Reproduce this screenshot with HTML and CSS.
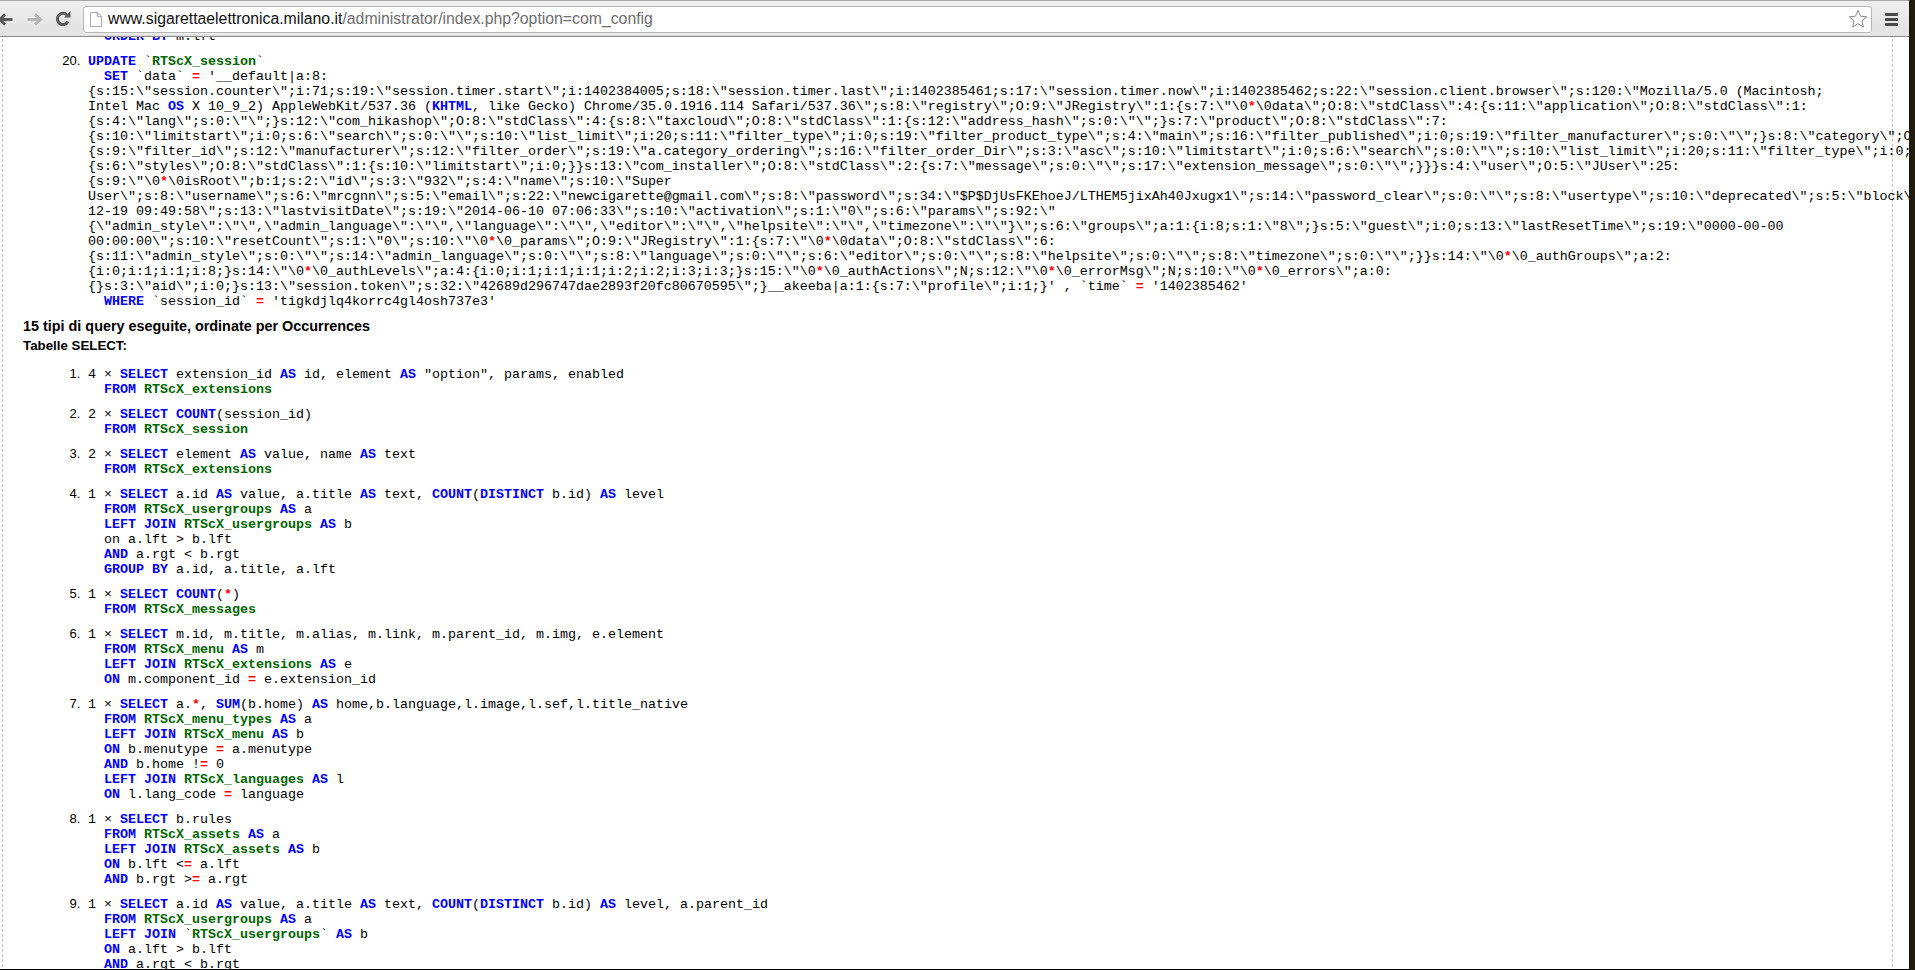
FILE: index.html
```html
<!DOCTYPE html>
<html lang="it">
<head>
<meta charset="utf-8">
<title>Joomla debug</title>
<link rel="stylesheet" href="styles.css">
</head>
<body>
<div class="window">
<div class="browser">
<header class="toolbar">
  <svg class="nav nav-back" viewBox="0 0 16 14"><path d="M1 7h14M7 1.500 1 7l6 5.500" fill="none" stroke="#5a5a5a" stroke-width="3"/></svg>
  <svg class="nav nav-forward" viewBox="0 0 16 14"><path d="M0 7h14M8 1.500 14 7l-6 5.500" fill="none" stroke="#b4b4b4" stroke-width="3"/></svg>
  <svg class="nav nav-reload" viewBox="0 0 16 16"><path d="M13 10.500A5.600 5.600 0 1 1 12 4" fill="none" stroke="#5a5a5a" stroke-width="3"/><path d="M9 6.500h6.500V0z" fill="#5a5a5a"/></svg>
  <div class="omnibox">
    <svg class="page-icon" viewBox="0 0 12 15"><path d="M.5.500h7l4 4v10H.5zM7.500.500v4h4" fill="#fff" stroke="#aaa"/></svg>
    <div class="url"><span class="url-host">www.sigarettaelettronica.milano.it</span><span class="url-path">/administrator/index.php?option=com_config</span></div>
    <svg class="star" viewBox="0 0 20 20"><path d="M10 1.500l2.500 5.700 6.200.6-4.700 4.100 1.400 6.100L10 14.800l-5.400 3.200L6 11.900 1.300 7.800l6.200-.6z" fill="#fff" stroke="#8a8a8a"/></svg>
  </div>
  <div class="menu"><i></i><i></i><i></i></div>
</header>
<main class="viewport">
<div class="page">
<ol class="queries queries-first" start="19">
<li class="query query-clipped"><code class="sql">&nbsp;&nbsp;<b class="k">ORDER BY</b> m.lft</code></li>
<li class="query"><code class="sql"><b class="k">UPDATE</b> `<b class="t">RTScX_session</b>`<br>
&nbsp;&nbsp;<b class="k">SET</b> `data` <b class="o">=</b> '__default|a:8:<br>
{s:15:\"session.counter\";i:71;s:19:\"session.timer.start\";i:1402384005;s:18:\"session.timer.last\";i:1402385461;s:17:\"session.timer.now\";i:1402385462;s:22:\"session.client.browser\";s:120:\"Mozilla/5.0 (Macintosh;<br>
Intel Mac <b class="k">OS</b> X 10_9_2) AppleWebKit/537.36 (<b class="k">KHTML</b>, like Gecko) Chrome/35.0.1916.114 Safari/537.36\";s:8:\"registry\";O:9:\"JRegistry\":1:{s:7:\"\0<b class="o">*</b>\0data\";O:8:\"stdClass\":4:{s:11:\"application\";O:8:\"stdClass\":1:<br>
{s:4:\"lang\";s:0:\"\";}s:12:\"com_hikashop\";O:8:\"stdClass\":4:{s:8:\"taxcloud\";O:8:\"stdClass\":1:{s:12:\"address_hash\";s:0:\"\";}s:7:\"product\";O:8:\"stdClass\":7:<br>
{s:10:\"limitstart\";i:0;s:6:\"search\";s:0:\"\";s:10:\"list_limit\";i:20;s:11:\"filter_type\";i:0;s:19:\"filter_product_type\";s:4:\"main\";s:16:\"filter_published\";i:0;s:19:\"filter_manufacturer\";s:0:\"\";}s:8:\"category\";O:8:\"stdClass\":7:<br>
{s:9:\"filter_id\";s:12:\"manufacturer\";s:12:\"filter_order\";s:19:\"a.category_ordering\";s:16:\"filter_order_Dir\";s:3:\"asc\";s:10:\"limitstart\";i:0;s:6:\"search\";s:0:\"\";s:10:\"list_limit\";i:20;s:11:\"filter_type\";i:0;s:4:\"main\";<br>
{s:6:\"styles\";O:8:\"stdClass\":1:{s:10:\"limitstart\";i:0;}}s:13:\"com_installer\";O:8:\"stdClass\":2:{s:7:\"message\";s:0:\"\";s:17:\"extension_message\";s:0:\"\";}}}s:4:\"user\";O:5:\"JUser\":25:<br>
{s:9:\"\0<b class="o">*</b>\0isRoot\";b:1;s:2:\"id\";s:3:\"932\";s:4:\"name\";s:10:\"Super<br>
User\";s:8:\"username\";s:6:\"mrcgnn\";s:5:\"email\";s:22:\"newcigarette@gmail.com\";s:8:\"password\";s:34:\"$P$DjUsFKEhoeJ/LTHEM5jixAh40Jxugx1\";s:14:\"password_clear\";s:0:\"\";s:8:\"usertype\";s:10:\"deprecated\";s:5:\"block\";i:0;s:9:\"sendEmail\";<br>
12-19 09:49:58\";s:13:\"lastvisitDate\";s:19:\"2014-06-10 07:06:33\";s:10:\"activation\";s:1:\"0\";s:6:\"params\";s:92:\"<br>
{\"admin_style\":\"\",\"admin_language\":\"\",\"language\":\"\",\"editor\":\"\",\"helpsite\":\"\",\"timezone\":\"\"}\";s:6:\"groups\";a:1:{i:8;s:1:\"8\";}s:5:\"guest\";i:0;s:13:\"lastResetTime\";s:19:\"0000-00-00<br>
00:00:00\";s:10:\"resetCount\";s:1:\"0\";s:10:\"\0<b class="o">*</b>\0_params\";O:9:\"JRegistry\":1:{s:7:\"\0<b class="o">*</b>\0data\";O:8:\"stdClass\":6:<br>
{s:11:\"admin_style\";s:0:\"\";s:14:\"admin_language\";s:0:\"\";s:8:\"language\";s:0:\"\";s:6:\"editor\";s:0:\"\";s:8:\"helpsite\";s:0:\"\";s:8:\"timezone\";s:0:\"\";}}s:14:\"\0<b class="o">*</b>\0_authGroups\";a:2:<br>
{i:0;i:1;i:1;i:8;}s:14:\"\0<b class="o">*</b>\0_authLevels\";a:4:{i:0;i:1;i:1;i:1;i:2;i:2;i:3;i:3;}s:15:\"\0<b class="o">*</b>\0_authActions\";N;s:12:\"\0<b class="o">*</b>\0_errorMsg\";N;s:10:\"\0<b class="o">*</b>\0_errors\";a:0:<br>
{}s:3:\"aid\";i:0;}s:13:\"session.token\";s:32:\"42689d296747dae2893f20fc80670595\";}__akeeba|a:1:{s:7:\"profile\";i:1;}' , `time` <b class="o">=</b> '1402385462'<br>
&nbsp;&nbsp;<b class="k">WHERE</b> `session_id` <b class="o">=</b> 'tigkdjlq4korrc4gl4osh737e3'</code></li>
</ol>
<h4 class="summary-title">15 tipi di query eseguite, ordinate per Occurrences</h4>
<h5 class="summary-sub">Tabelle SELECT:</h5>
<ol class="queries queries-summary">
<li class="query"><code class="sql">4 × <b class="k">SELECT</b> extension_id <b class="k">AS</b> id, element <b class="k">AS</b> "option", params, enabled<br>
&nbsp;&nbsp;<b class="k">FROM</b> <b class="t">RTScX_extensions</b></code></li>
<li class="query"><code class="sql">2 × <b class="k">SELECT</b> <b class="k">COUNT</b>(session_id)<br>
&nbsp;&nbsp;<b class="k">FROM</b> <b class="t">RTScX_session</b></code></li>
<li class="query"><code class="sql">2 × <b class="k">SELECT</b> element <b class="k">AS</b> value, name <b class="k">AS</b> text<br>
&nbsp;&nbsp;<b class="k">FROM</b> <b class="t">RTScX_extensions</b></code></li>
<li class="query"><code class="sql">1 × <b class="k">SELECT</b> a.id <b class="k">AS</b> value, a.title <b class="k">AS</b> text, <b class="k">COUNT</b>(<b class="k">DISTINCT</b> b.id) <b class="k">AS</b> level<br>
&nbsp;&nbsp;<b class="k">FROM</b> <b class="t">RTScX_usergroups</b> <b class="k">AS</b> a<br>
&nbsp;&nbsp;<b class="k">LEFT JOIN</b> <b class="t">RTScX_usergroups</b> <b class="k">AS</b> b<br>
&nbsp;&nbsp;on a.lft &gt; b.lft<br>
&nbsp;&nbsp;<b class="k">AND</b> a.rgt &lt; b.rgt<br>
&nbsp;&nbsp;<b class="k">GROUP BY</b> a.id, a.title, a.lft</code></li>
<li class="query"><code class="sql">1 × <b class="k">SELECT</b> <b class="k">COUNT</b>(<b class="o">*</b>)<br>
&nbsp;&nbsp;<b class="k">FROM</b> <b class="t">RTScX_messages</b></code></li>
<li class="query"><code class="sql">1 × <b class="k">SELECT</b> m.id, m.title, m.alias, m.link, m.parent_id, m.img, e.element<br>
&nbsp;&nbsp;<b class="k">FROM</b> <b class="t">RTScX_menu</b> <b class="k">AS</b> m<br>
&nbsp;&nbsp;<b class="k">LEFT JOIN</b> <b class="t">RTScX_extensions</b> <b class="k">AS</b> e<br>
&nbsp;&nbsp;<b class="k">ON</b> m.component_id <b class="o">=</b> e.extension_id</code></li>
<li class="query"><code class="sql">1 × <b class="k">SELECT</b> a.<b class="o">*</b>, <b class="k">SUM</b>(b.home) <b class="k">AS</b> home,b.language,l.image,l.sef,l.title_native<br>
&nbsp;&nbsp;<b class="k">FROM</b> <b class="t">RTScX_menu_types</b> <b class="k">AS</b> a<br>
&nbsp;&nbsp;<b class="k">LEFT JOIN</b> <b class="t">RTScX_menu</b> <b class="k">AS</b> b<br>
&nbsp;&nbsp;<b class="k">ON</b> b.menutype <b class="o">=</b> a.menutype<br>
&nbsp;&nbsp;<b class="k">AND</b> b.home !<b class="o">=</b> 0<br>
&nbsp;&nbsp;<b class="k">LEFT JOIN</b> <b class="t">RTScX_languages</b> <b class="k">AS</b> l<br>
&nbsp;&nbsp;<b class="k">ON</b> l.lang_code <b class="o">=</b> language</code></li>
<li class="query"><code class="sql">1 × <b class="k">SELECT</b> b.rules<br>
&nbsp;&nbsp;<b class="k">FROM</b> <b class="t">RTScX_assets</b> <b class="k">AS</b> a<br>
&nbsp;&nbsp;<b class="k">LEFT JOIN</b> <b class="t">RTScX_assets</b> <b class="k">AS</b> b<br>
&nbsp;&nbsp;<b class="k">ON</b> b.lft &lt;<b class="o">=</b> a.lft<br>
&nbsp;&nbsp;<b class="k">AND</b> b.rgt &gt;<b class="o">=</b> a.rgt</code></li>
<li class="query"><code class="sql">1 × <b class="k">SELECT</b> a.id <b class="k">AS</b> value, a.title <b class="k">AS</b> text, <b class="k">COUNT</b>(<b class="k">DISTINCT</b> b.id) <b class="k">AS</b> level, a.parent_id<br>
&nbsp;&nbsp;<b class="k">FROM</b> <b class="t">RTScX_usergroups</b> <b class="k">AS</b> a<br>
&nbsp;&nbsp;<b class="k">LEFT JOIN</b> `<b class="t">RTScX_usergroups</b>` <b class="k">AS</b> b<br>
&nbsp;&nbsp;<b class="k">ON</b> a.lft &gt; b.lft<br>
&nbsp;&nbsp;<b class="k">AND</b> a.rgt &lt; b.rgt</code></li>
</ol>
</div>
</main>
</div>
<div class="desktop-edge"></div>
</div>
</body>
</html>
```
FILE: styles.css
```css
html, body {
  margin: 0;
  height: 100%;
  overflow: hidden;
  background: #fff;
}

.window {
  display: flex;
  height: 970px;
  font-family: "Liberation Sans", Arial, sans-serif;
  color: #000;
}

.browser {
  flex: 1;
  min-width: 0;
  display: flex;
  flex-direction: column;
  background: #fff;
}

.desktop-edge {
  width: 6px;
  flex: none;
  background: #1f1a0c;
}

.toolbar {
  height: 34px;
  flex: none;
  display: flex;
  align-items: center;
  padding-top: 1px;
  background: linear-gradient(#efefef, #e2e2e2);
  border-top: 1px solid #a8a8a8;
  border-bottom: 1px solid #8c8c8c;
  position: relative;
  z-index: 1;
}

.nav {
  flex: none;
  display: block;
}

.nav-back {
  width: 16px;
  height: 13px;
  margin-left: -2px;
}

.nav-forward {
  width: 16px;
  height: 13px;
  margin-left: 13px;
}

.nav-reload {
  width: 16px;
  height: 16px;
  margin-left: 12px;
}

.omnibox {
  flex: 1;
  height: 25px;
  margin-left: 12px;
  display: flex;
  align-items: center;
  background: #fff;
  border: 1px solid #b5b5b5;
  border-radius: 3px;
  box-shadow: 0 1px 0 #f4f4f4;
}

.page-icon {
  width: 12px;
  height: 15px;
  margin-left: 6px;
  flex: none;
}

.url {
  flex: 1;
  margin-left: 6px;
  font-size: 15.8px;
  white-space: nowrap;
}

.url-host {
  color: #111;
}

.url-path {
  color: #6e6e6e;
}

.star {
  width: 20px;
  height: 20px;
  margin-right: 3px;
  flex: none;
}

.menu {
  width: 13px;
  margin: 0 11px 0 13px;
  flex: none;
  display: flex;
  flex-direction: column;
  gap: 2px;
}

.menu i {
  display: block;
  height: 3px;
  background: #4a4a4a;
  border-radius: 1px;
}

.viewport {
  flex: 1;
  min-height: 0;
  overflow: hidden;
  background: #fff;
  border-bottom: 1px solid #000;
}

.page {
  margin: 0 16px 0 2px;
  min-height: 100%;
  border-left: 1px dashed #c4c4c4;
  border-right: 1px dashed #c4c4c4;
  box-sizing: border-box;
  font-size: 13px;
}

.queries {
  margin: 0;
  padding: 0 0 0 81px;
  font-size: 13px;
}

.queries-first {
  margin-top: -8px;
}

.queries-summary {
  margin-top: 12px;
}

.query {
  margin-bottom: 9px;
  line-height: 15px;
}

.query:last-child {
  margin-bottom: 0;
}

.query-clipped {
  list-style: none;
}

.sql {
  display: block;
  margin-left: 4px;
  font-family: "Liberation Mono", "Courier New", monospace;
  font-size: 13.33px;
  line-height: 15px;
  white-space: nowrap;
}

.k {
  color: #00f;
}

.t {
  color: #060;
}

.o {
  color: #f00;
}

.summary-title {
  margin: 9px 0 4px 20px;
  font-size: 14.4px;
  line-height: 16px;
  font-weight: bold;
}

.summary-sub {
  margin: 0 0 0 20px;
  font-size: 13.3px;
  line-height: 16px;
  font-weight: bold;
}
```
